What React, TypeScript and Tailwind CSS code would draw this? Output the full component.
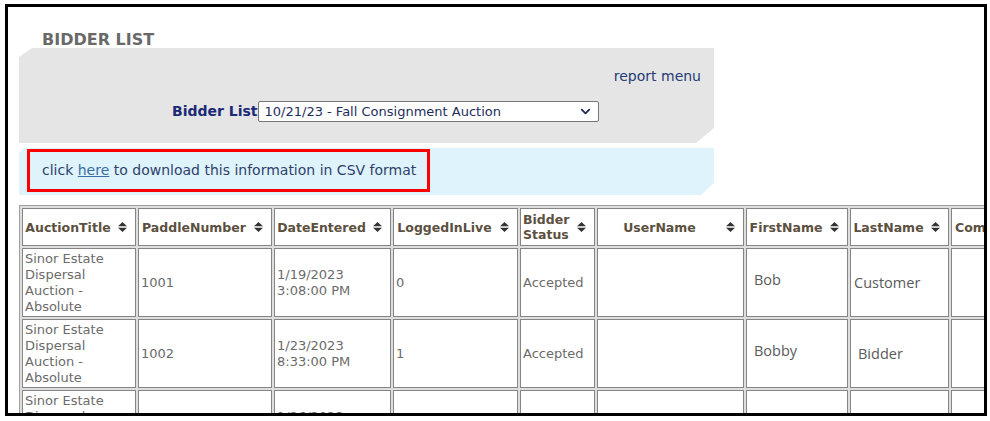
import { ChevronDown } from "lucide-react";

const font = "font-['DejaVu_Sans','Liberation_Sans',sans-serif]";

type Row = {
  title: string; paddle: string; date: string; live: string; status: string;
  user: string; first: string; last: string; comments: string;
};

const rows: Row[] = [
  { title: "Sinor Estate Dispersal Auction - Absolute", paddle: "1001", date: "1/19/2023 3:08:00 PM", live: "0", status: "Accepted", user: "", first: "Bob", last: "Customer", comments: "" },
  { title: "Sinor Estate Dispersal Auction - Absolute", paddle: "1002", date: "1/23/2023 8:33:00 PM", live: "1", status: "Accepted", user: "", first: "Bobby", last: "Bidder", comments: "" },
  { title: "Sinor Estate Dispersal Auction - Absolute", paddle: "1003", date: "1/26/2023 9:14:00 AM", live: "0", status: "Accepted", user: "", first: "Sam", last: "Buyer", comments: "" },
];

const cols: { label: string; w: string; align: string }[] = [
  { label: "AuctionTitle", w: "w-[114px]", align: "text-center" },
  { label: "PaddleNumber", w: "w-[134px]", align: "text-center" },
  { label: "DateEntered", w: "w-[117px]", align: "text-center" },
  { label: "LoggedInLive", w: "w-[125px]", align: "text-center" },
  { label: "Bidder Status", w: "w-[75px]", align: "text-left" },
  { label: "UserName", w: "w-[147px]", align: "text-center" },
  { label: "FirstName", w: "w-[102px]", align: "text-center" },
  { label: "LastName", w: "w-[99px]", align: "text-center" },
  { label: "Comments", w: "w-[130px]", align: "text-left pl-[1px]" },
];

function SortIcon() {
  return (
    <svg width="9" height="10" viewBox="0 0 9 10" className="ml-[7px] mr-[6px] shrink-0">
      <path d="M0 4.2 L4.5 0 L9 4.2Z M0 5.8 L4.5 10 L9 5.8Z" fill="#333" />
    </svg>
  );
}

const cell = "border border-[#858585] bg-white px-[2px] py-[1px] align-middle";

export default function App() {
  return (
    <div className={`w-[990px] h-[421px] bg-white pt-[4px] pl-[5px] ${font}`}>
      <div className="w-[982px] h-[412px] border-[3px] border-black overflow-hidden bg-white">
        <div className="pl-[34px] pt-[24px] text-[16px] leading-[17px] font-bold text-[#696969]">BIDDER LIST</div>

        {/* report selector */}
        <div className="ml-[11px] w-[695px] h-[95px] bg-[#e5e5e5] [clip-path:polygon(13px_0,100%_0,100%_calc(100%-15px),calc(100%-18px)_100%,0_100%,0_9px)]">
          <div className="pt-[20px] pr-[13px] text-right text-[14px] leading-[17px] text-[#253b73]">report menu</div>
          <div className="mt-[16px] flex items-center pl-[153px]">
            <span className="text-[14px] font-bold text-[#1b2a78]">Bidder List</span>
            <div className="flex h-[21px] w-[341px] items-center justify-between rounded-[2px] border border-[#767676] bg-white pl-[6px] pr-[5px] text-[13px] text-[#1e2d5a]">
              <span>10/21/23 - Fall Consignment Auction</span>
              <ChevronDown size={15} strokeWidth={3} className="text-[#1e2d5a]" />
            </div>
          </div>
        </div>

        {/* csv download */}
        <div className="mt-[5px] ml-[11px] w-[695px] h-[47px] bg-[#def3fc] pt-[1px] pl-[8px] [clip-path:polygon(5px_0,100%_0,100%_calc(100%-12px),calc(100%-13px)_100%,0_100%,0_5px)]">
          <div className="flex h-[43px] w-[403px] items-center border-[3px] border-[#ff0000] pl-[12px] text-[14px] leading-[17px] text-[#2f3f6b]">
            <span>click <a className="text-[#3a6ea5] underline">here</a> to download this information in CSV format</span>
          </div>
        </div>

        <table className="mt-[10px] ml-[11px] w-[1065px] table-fixed border-separate border-spacing-[2px] border border-[#a0a0a0] bg-[#dedede]">
          <thead>
            <tr>
              {cols.map(c => (
                <th key={c.label} className={`${c.w} ${cell} h-[38px] text-[12.5px] leading-[15px] font-bold text-[#5c5040]`}>
                  <div className="flex items-center">
                    <span className={`flex-1 ${c.align}`}>{c.label}</span>
                    <SortIcon />
                  </div>
                </th>
              ))}
            </tr>
          </thead>
          <tbody className="text-[13px] leading-[16px] text-[#6b6b6b]">
            {rows.map(r => (
              <tr key={r.paddle}>
                <td className={`${cell} h-[69px]`}>{r.title}</td>
                <td className={cell}>{r.paddle}</td>
                <td className={cell}>{r.date}</td>
                <td className={cell}>{r.live}</td>
                <td className={cell}>{r.status}</td>
                <td className={cell}>{r.user}</td>
                <td className={cell}>
                  <span className="block pl-[5px] pb-[6px] font-['Open_Sans',sans-serif] text-[14.5px] text-[#5a5a5a]">{r.first}</span>
                </td>
                <td className={cell}>
                  <span className={`block font-['Open_Sans',sans-serif] text-[14.5px] text-[#5a5a5a] ${r.last === "Bidder" ? "pl-[5px]" : "pl-[1px]"}`}>{r.last}</span>
                </td>
                <td className={cell}>{r.comments}</td>
              </tr>
            ))}
          </tbody>
        </table>
      </div>
    </div>
  );
}
